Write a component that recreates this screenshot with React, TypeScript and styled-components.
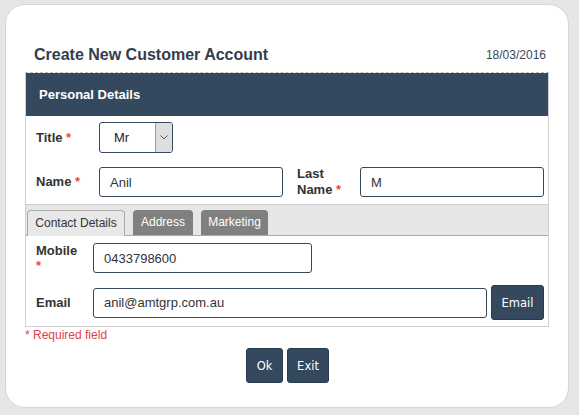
import React from "react";
import styled, { createGlobalStyle } from "styled-components";

const Global = createGlobalStyle`
  html, body { margin: 0; padding: 0; background: #e6e6e6; }
  body { font-family: "Liberation Sans", Arial, sans-serif; }
  * { box-sizing: border-box; }
`;

const Page = styled.div`
  width: 579px;
  height: 415px;
  padding: 4px 10px 7px 5px;
`;

const Card = styled.div`
  background: #fff;
  border: 1px solid #d6d6d6;
  border-radius: 20px;
  height: 100%;
  padding: 0 19px 0 19px;
  display: flex;
  flex-direction: column;
`;

const HeadRow = styled.div`
  display: flex;
  justify-content: space-between;
  align-items: center;
  height: 32px;
  margin-top: 35px;
  padding: 0 3px 2px 9px;
`;

const Title = styled.h1`
  margin: 0;
  font-size: 16px;
  font-weight: bold;
  color: #333d4c;
`;

const DateText = styled.span`
  font-size: 12px;
  color: #3b4760;
`;

const Panel = styled.div`
  border: 1px solid #cfcfcf;
  border-top: 1px dashed #bdbdbd;
`;

const PanelHeader = styled.div`
  background: #34495e;
  color: #fff;
  height: 43px;
  display: flex;
  align-items: center;
  padding-left: 13px;
  font-size: 13px;
  font-weight: bold;
`;

const Section = styled.div`
  padding: 6px 3px 6px 10px;
  display: flex;
  flex-direction: column;
  gap: 13px;
`;

const Row = styled.div<{ $top?: boolean }>`
  display: flex;
  align-items: ${(p) => (p.$top ? "flex-start" : "center")};
`;

const Label = styled.label<{ $w: number }>`
  width: ${(p) => p.$w}px;
  flex: none;
  font-size: 13px;
  font-weight: bold;
  color: #333;
  line-height: 16px;
`;

const TopLabel = styled(Label)`
  line-height: 15px;
`;

const Star = styled.span`
  color: #e74c3c;
  font-weight: bold;
`;

const Input = styled.div<{ $w: number; $h?: number }>`
  width: ${(p) => p.$w}px;
  height: ${(p) => p.$h ?? 30}px;
  flex: none;
  border: 1px solid #34495e;
  border-radius: 3px;
  display: flex;
  align-items: center;
  padding-left: 10px;
  font-size: 13px;
  color: #333;
`;

const Select = styled.div`
  width: 74px;
  height: 31px;
  border: 1px solid #34495e;
  border-radius: 3px;
  display: flex;
  align-items: stretch;
  font-size: 13px;
  color: #222;
  overflow: hidden;
`;

const SelectValue = styled.span`
  flex: 1;
  display: flex;
  align-items: center;
  padding-left: 14px;
`;

const SelectArrow = styled.span`
  width: 17px;
  background: #dedede;
  border-left: 1px solid #9a9a9a;
  display: flex;
  align-items: center;
  justify-content: center;
`;

const Spacer = styled.div<{ $w: number }>`
  width: ${(p) => p.$w}px;
  flex: none;
`;

const TabBar = styled.div`
  background: #e6e6e6;
  border-top: 1px solid #cfcfcf;
  border-bottom: 1px solid #aaa;
  height: 32px;
  display: flex;
  align-items: flex-end;
  gap: 8px;
  padding-left: 1px;
`;

const Tab = styled.div<{ $active?: boolean; $w: number }>`
  width: ${(p) => p.$w}px;
  height: ${(p) => (p.$active ? 26 : 25)}px;
  margin-bottom: ${(p) => (p.$active ? -1 : 0)}px;
  border: 1px solid ${(p) => (p.$active ? "#aaa" : "#808080")};
  border-bottom: none;
  border-radius: 4px 4px 0 0;
  background: ${(p) => (p.$active ? "#e8e8e8" : "#808080")};
  color: ${(p) => (p.$active ? "#333" : "#fff")};
  font-size: 12px;
  display: flex;
  align-items: center;
  justify-content: center;
  padding-bottom: 2px;
`;

const TabBody = styled.div`
  padding: 7px 3px 6px 10px;
  display: flex;
  flex-direction: column;
  gap: 12px;
`;

const DarkButton = styled.button<{ $w: number }>`
  width: ${(p) => p.$w}px;
  height: 35px;
  flex: none;
  background: #34495e;
  color: #fff;
  border: 1px solid #2a3b4c;
  border-radius: 3px;
  font-family: "DejaVu Sans", Tahoma, sans-serif;
  font-size: 11.5px;
  padding: 0;
`;

const Required = styled.div`
  color: #e0404a;
  font-size: 12px;
  margin-top: 1px;
  height: 18px;
`;

const Actions = styled.div`
  display: flex;
  justify-content: center;
  gap: 4px;
  margin-top: 2px;
  padding-left: 1px;
`;

const Chevron = () => (
  <svg width="8" height="5" viewBox="0 0 8 5">
    <path d="M0.5 0.5 L4 4 L7.5 0.5" fill="none" stroke="#555" strokeWidth="1" />
  </svg>
);

export default function App() {
  return (
    <>
      <Global />
      <Page>
        <Card>
          <HeadRow>
            <Title>Create New Customer Account</Title>
            <DateText>18/03/2016</DateText>
          </HeadRow>
          <Panel>
            <PanelHeader>Personal Details</PanelHeader>
            <Section>
              <Row>
                <Label $w={63}>
                  Title <Star>*</Star>
                </Label>
                <Select>
                  <SelectValue>Mr</SelectValue>
                  <SelectArrow>
                    <Chevron />
                  </SelectArrow>
                </Select>
              </Row>
              <Row>
                <Label $w={63}>
                  Name <Star>*</Star>
                </Label>
                <Input $w={184} $h={30}>Anil</Input>
                <Spacer $w={14} />
                <Label $w={63}>
                  Last
                  <br />
                  Name <Star>*</Star>
                </Label>
                <Input $w={184} $h={30}>M</Input>
              </Row>
            </Section>
            <TabBar>
              <Tab $active $w={98}>Contact Details</Tab>
              <Tab $w={60}>Address</Tab>
              <Tab $w={67}>Marketing</Tab>
            </TabBar>
            <TabBody>
              <Row $top>
                <TopLabel $w={57}>
                  Mobile
                  <br />
                  <Star>*</Star>
                </TopLabel>
                <Input $w={219}>0433798600</Input>
              </Row>
              <Row>
                <Label $w={57}>Email</Label>
                <Input $w={394}>anil@amtgrp.com.au</Input>
                <Spacer $w={4} />
                <DarkButton $w={53}>Email</DarkButton>
              </Row>
            </TabBody>
          </Panel>
          <Required>* Required field</Required>
          <Actions>
            <DarkButton $w={37}>Ok</DarkButton>
            <DarkButton $w={42}>Exit</DarkButton>
          </Actions>
        </Card>
      </Page>
    </>
  );
}
